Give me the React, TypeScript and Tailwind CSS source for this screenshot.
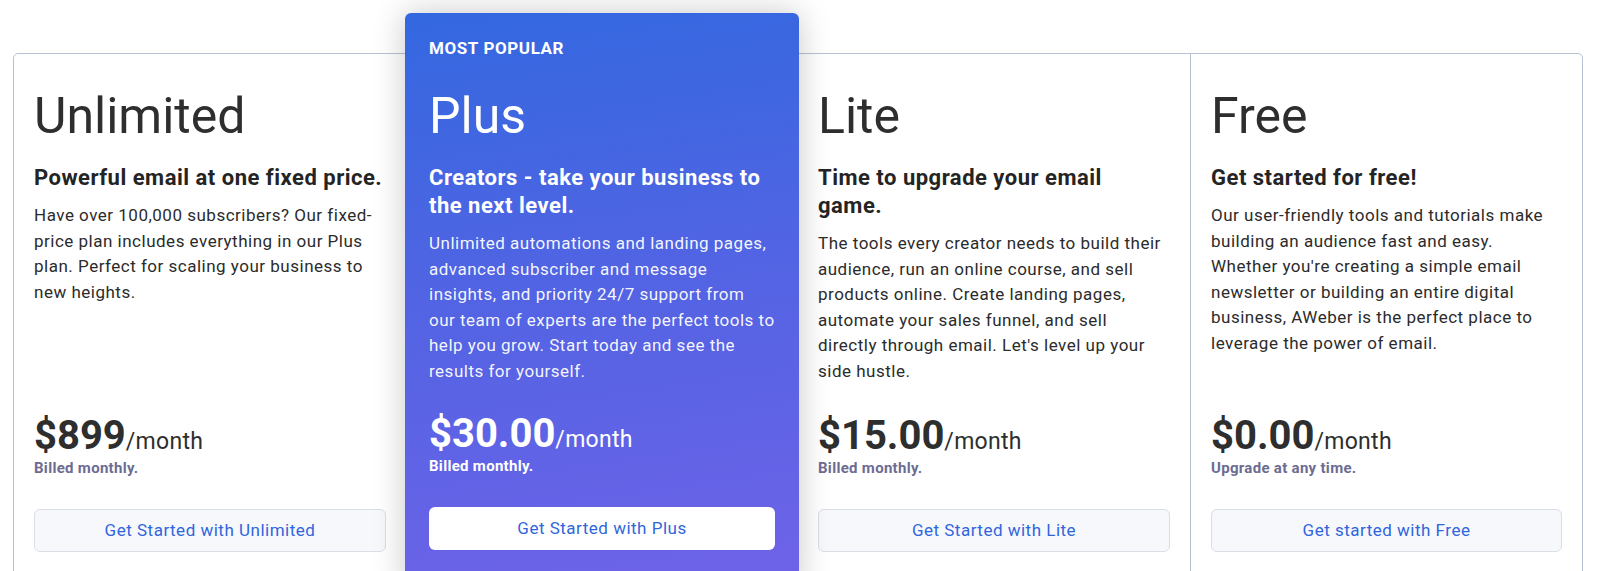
import React from "react";

interface Plan {
  name: string;
  tagline: string;
  description: string;
  price: string;
  note: string;
  cta: string;
  featured?: boolean;
}

const plans: Plan[] = [
  {
    name: "Unlimited",
    tagline: "Powerful email at one fixed price.",
    description:
      "Have over 100,000 subscribers? Our fixed-price plan includes everything in our Plus plan. Perfect for scaling your business to new heights.",
    price: "$899",
    note: "Billed monthly.",
    cta: "Get Started with Unlimited",
  },
  {
    name: "Plus",
    tagline: "Creators - take your business to the next level.",
    description:
      "Unlimited automations and landing pages, advanced subscriber and message insights, and priority 24/7 support from our team of experts are the perfect tools to help you grow. Start today and see the results for yourself.",
    price: "$30.00",
    note: "Billed monthly.",
    cta: "Get Started with Plus",
    featured: true,
  },
  {
    name: "Lite",
    tagline: "Time to upgrade your email game.",
    description:
      "The tools every creator needs to build their audience, run an online course, and sell products online. Create landing pages, automate your sales funnel, and sell directly through email. Let's level up your side hustle.",
    price: "$15.00",
    note: "Billed monthly.",
    cta: "Get Started with Lite",
  },
  {
    name: "Free",
    tagline: "Get started for free!",
    description:
      "Our user-friendly tools and tutorials make building an audience fast and easy. Whether you're creating a simple email newsletter or building an entire digital business, AWeber is the perfect place to leverage the power of email.",
    price: "$0.00",
    note: "Upgrade at any time.",
    cta: "Get started with Free",
  },
];

function PlanBody({ plan }: { plan: Plan }) {
  const light = plan.featured;
  return (
    <>
      <div className={light ? "h-[328px]" : "h-[330px]"}>
        <h2
          className={`text-[50px] font-normal leading-[60px] ${
            light ? "text-white" : "text-[#2e2e2e]"
          }`}
        >
          {plan.name}
        </h2>
        <h3
          className={`mt-[18px] text-[22px] font-bold leading-7 tracking-[0.5px] ${
            light ? "text-white" : "text-[#242424]"
          }`}
        >
          {plan.tagline}
        </h3>
        <p
          className={`mt-[11px] text-[17px] leading-[25.6px] tracking-[0.5px] ${
            light ? "text-white/95" : "pr-1 text-[#2b2b2b]"
          }`}
        >
          {plan.description}
        </p>
      </div>
      <div
        className={`text-[40px] font-bold leading-[40px] ${
          light ? "text-white" : "text-[#2e2e2e]"
        }`}
      >
        {plan.price}
        <span className="text-[23px] font-normal leading-none tracking-[0.3px]">
          /month
        </span>
      </div>
      <div
        className={`mt-0.5 text-[15px] font-bold leading-5 tracking-[0.3px] ${
          light ? "text-white" : "text-[#6c6c93]"
        }`}
      >
        {plan.note}
      </div>
      <button
        className={`mt-[31px] h-[43px] w-full rounded-md text-[17px] tracking-[0.5px] text-[#2f66dc] ${
          light ? "bg-white" : "border border-[#d9dee7] bg-[#f7f8fc]"
        }`}
      >
        {plan.cta}
      </button>
    </>
  );
}

export default function App() {
  return (
    <div className="h-[571px] w-full overflow-hidden bg-white font-['Roboto',sans-serif]">
      <div className="ml-[13px] mr-[17px] mt-[53px] grid grid-cols-4 rounded-[5px] border border-[#b7c3d3]">
        {plans.map((plan, i) =>
          plan.featured ? (
            <div
              key={plan.name}
              className="relative z-10 -mx-px -mt-[41px] flex flex-col rounded-[6px] bg-[linear-gradient(172deg,#3368e0_0%,#5164e3_45%,#6f62e8_100%)] px-6 pb-10 shadow-[0_0_32px_rgba(0,0,0,0.22)]"
            >
              <div className="h-[73px] pt-[23px] text-[17px] font-bold uppercase leading-6 tracking-[0.6px] text-white">
                Most Popular
              </div>
              <PlanBody plan={plan} />
            </div>
          ) : (
            <div
              key={plan.name}
              className={`flex flex-col px-5 pb-10 pt-8 ${
                i === 3 ? "border-l border-[#b7c3d3]" : ""
              }`}
            >
              <PlanBody plan={plan} />
            </div>
          )
        )}
      </div>
    </div>
  );
}
